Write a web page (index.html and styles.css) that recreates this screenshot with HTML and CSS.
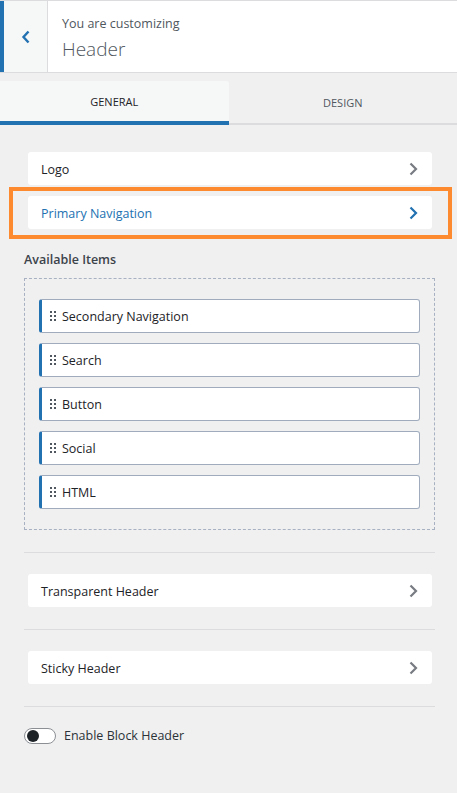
FILE: index.html
```html
<!DOCTYPE html>
<html lang="en">

<head>
    <meta charset="UTF-8">
    <title>Customizing Header</title>
    <link rel="stylesheet" href="styles.css">
</head>

<body>
    <div class="panel-header">
        <button class="back" aria-label="Back">
            <svg width="10" height="14" viewBox="0 0 10 14"><path d="M7.5 1.5 L2.5 7 L7.5 12.5" fill="none" stroke="#2271b1" stroke-width="2.4"/></svg>
        </button>
        <div class="title">
            <span class="sub">You are customizing</span>
            <span class="name">Header</span>
        </div>
    </div>

    <div class="tabs">
        <div class="tab active">GENERAL</div>
        <div class="tab">DESIGN</div>
    </div>

    <div class="content">
        <div class="section first">
            <div class="card">
                <span>Logo</span>
                <svg class="chev" width="9" height="14" viewBox="0 0 9 14"><path d="M1.5 1.5 L7 7 L1.5 12.5" fill="none" stroke-width="2.2"/></svg>
            </div>
            <div class="card current">
                <span>Primary Navigation</span>
                <svg class="chev" width="9" height="14" viewBox="0 0 9 14"><path d="M1.5 1.5 L7 7 L1.5 12.5" fill="none" stroke-width="2.2"/></svg>
            </div>

            <h3 class="label">Available Items</h3>
            <div class="available">
                <div class="item"><svg class="drag" width="6" height="10" viewBox="0 0 6 10"><rect x="0" y="0" width="2" height="2"/><rect x="4" y="0" width="2" height="2"/><rect x="0" y="4" width="2" height="2"/><rect x="4" y="4" width="2" height="2"/><rect x="0" y="8" width="2" height="2"/><rect x="4" y="8" width="2" height="2"/></svg>Secondary Navigation</div>
                <div class="item"><svg class="drag" width="6" height="10" viewBox="0 0 6 10"><rect x="0" y="0" width="2" height="2"/><rect x="4" y="0" width="2" height="2"/><rect x="0" y="4" width="2" height="2"/><rect x="4" y="4" width="2" height="2"/><rect x="0" y="8" width="2" height="2"/><rect x="4" y="8" width="2" height="2"/></svg>Search</div>
                <div class="item"><svg class="drag" width="6" height="10" viewBox="0 0 6 10"><rect x="0" y="0" width="2" height="2"/><rect x="4" y="0" width="2" height="2"/><rect x="0" y="4" width="2" height="2"/><rect x="4" y="4" width="2" height="2"/><rect x="0" y="8" width="2" height="2"/><rect x="4" y="8" width="2" height="2"/></svg>Button</div>
                <div class="item"><svg class="drag" width="6" height="10" viewBox="0 0 6 10"><rect x="0" y="0" width="2" height="2"/><rect x="4" y="0" width="2" height="2"/><rect x="0" y="4" width="2" height="2"/><rect x="4" y="4" width="2" height="2"/><rect x="0" y="8" width="2" height="2"/><rect x="4" y="8" width="2" height="2"/></svg>Social</div>
                <div class="item"><svg class="drag" width="6" height="10" viewBox="0 0 6 10"><rect x="0" y="0" width="2" height="2"/><rect x="4" y="0" width="2" height="2"/><rect x="0" y="4" width="2" height="2"/><rect x="4" y="4" width="2" height="2"/><rect x="0" y="8" width="2" height="2"/><rect x="4" y="8" width="2" height="2"/></svg>HTML</div>
            </div>
        </div>

        <div class="section">
            <div class="card">
                <span>Transparent Header</span>
                <svg class="chev" width="9" height="14" viewBox="0 0 9 14"><path d="M1.5 1.5 L7 7 L1.5 12.5" fill="none" stroke-width="2.2"/></svg>
            </div>
        </div>

        <div class="section">
            <div class="card">
                <span>Sticky Header</span>
                <svg class="chev" width="9" height="14" viewBox="0 0 9 14"><path d="M1.5 1.5 L7 7 L1.5 12.5" fill="none" stroke-width="2.2"/></svg>
            </div>
        </div>

        <label class="toggle-row">
            <span class="toggle"><span class="knob"></span></span>
            Enable Block Header
        </label>
    </div>
</body>

</html>
```

FILE: styles.css
```css
body {
    margin: 0;
    background-color: #f0f0f1;
    font-family: "Open Sans", "Noto Sans", sans-serif;
    font-size: 12.5px;
    color: #1d2327;
}

.panel-header {
    display: flex;
    height: 71px;
    background-color: #fff;
    border-top: 1px solid #dcdcde;
    border-bottom: 1px solid #dcdcde;
}

.back {
    width: 48px;
    padding: 0;
    border: none;
    border-left: 4px solid #2271b1;
    border-right: 1px solid #dcdcde;
    background-color: #f6f7f7;
    display: flex;
    align-items: center;
    justify-content: center;
}

.title {
    display: flex;
    flex-direction: column;
    padding: 13px 0 0 14px;
}

.title .sub {
    font-size: 12.5px;
    color: #50575e;
    line-height: 20px;
}

.title .name {
    font-size: 19px;
    font-weight: 300;
    color: #50575e;
    line-height: 28px;
    margin-top: 1px;
}

.tabs {
    display: flex;
    margin-top: 8px;
}

.tab {
    flex: 1;
    height: 42px;
    display: flex;
    align-items: center;
    justify-content: center;
    font-size: 11px;
    color: #50575e;
    border-bottom: 2px solid #dcdcde;
}

.tab.active {
    background-color: #f6f7f7;
    color: #1d2327;
    height: 40px;
    border-bottom: 4px solid #2271b1;
    border-top-right-radius: 3px;
}

.content {
    padding: 0 22px 0 24px;
}

.section {
    padding: 21px 0 22px;
    border-bottom: 1px solid #dcdcde;
}

.section.first {
    padding-top: 27px;
}

.card {
    position: relative;
    display: flex;
    align-items: center;
    justify-content: space-between;
    box-sizing: border-box;
    height: 33px;
    margin: 0 3px 0 4px;
    padding: 1px 14px 0 13px;
    background-color: #fff;
    border-radius: 3px;
}

.card + .card {
    margin-top: 11px;
}

.chev {
    stroke: #787c82;
    margin-top: -1px;
}

.card.current {
    color: #2271b1;
}

.card.current .chev {
    stroke: #2271b1;
}

/* highlight frame around the current item */
.card.current::after {
    content: "";
    position: absolute;
    top: -9px;
    left: -19px;
    right: -20px;
    bottom: -10px;
    border: 4px solid #fd8a2f;
}

.label {
    margin: 22px 0 9px;
    font-size: 12.5px;
    font-weight: 600;
    line-height: 18px;
    color: #3c434a;
}

.available {
    display: flex;
    flex-direction: column;
    gap: 10px;
    padding: 20px 14px;
    border: 1px dashed #a7b1c2;
}

.item {
    display: flex;
    align-items: center;
    box-sizing: border-box;
    height: 34px;
    padding: 1px 0 0 8px;
    background-color: #fff;
    border: 1px solid #a0acbd;
    border-left: 3px solid #2271b1;
    border-radius: 3px;
    color: #1d2327;
}

.drag {
    fill: #50575e;
    margin: -1px 6px 0 0;
}

.toggle-row {
    display: flex;
    align-items: center;
    gap: 8px;
    margin-top: 20px;
    color: #2c3338;
}

.toggle {
    box-sizing: border-box;
    width: 32px;
    height: 16px;
    border: 1px solid #8c8f94;
    border-radius: 8px;
    background-color: #fff;
    display: flex;
    align-items: center;
    padding-left: 2px;
}

.knob {
    width: 12px;
    height: 12px;
    border-radius: 50%;
    background-color: #1d2327;
}
```
